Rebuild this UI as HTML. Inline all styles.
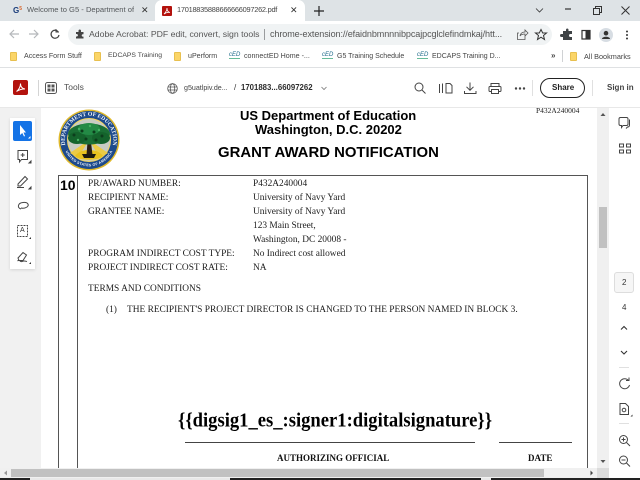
<!DOCTYPE html>
<html><head><meta charset="utf-8">
<style>
html,body{margin:0;padding:0;width:640px;height:480px;overflow:hidden;background:#fff}
body{position:relative;font-family:"Liberation Sans",sans-serif;color:#3c4043}
.a{position:absolute}
.t{position:absolute;white-space:nowrap;line-height:1}
.d{font-family:"Liberation Serif",serif;font-size:9.4px;color:#1c1c1c}
.h{font-weight:bold;color:#000}
svg{position:absolute;overflow:visible}
.bm{font-size:7.100px;color:#444;top:52.500px}
.f{position:absolute;top:52px;width:7px;height:9px;background:#fbd568;border:1px solid #e8c04f;box-sizing:border-box;border-radius:1px}
.ced{position:absolute;top:52px;font:italic 6px "Liberation Sans",sans-serif;color:#1d6a8a;border-bottom:1px solid #6b9;line-height:6px}
</style></head><body>
<!-- tab strip -->
<div class="a" style="left:0;top:0;width:640px;height:21px;background:#dee3e6"></div>
<div class="a" style="left:155px;top:0;width:150px;height:22px;background:#fff;border-radius:7px 7px 0 0"></div>
<div class="t" style="left:13px;top:7px;font-size:8px;font-weight:bold;color:#1a3c7a">G<span style="font-size:5px;color:#d8642a;vertical-align:3px">5</span></div>
<div class="t" style="left:27px;top:6px;font-size:7.600px;width:107px;overflow:hidden;color:#55595c">Welcome to G5 - Department of</div>
<div class="t" style="left:141px;top:6px;font-size:9px;color:#333">✕</div>
<div class="a" style="left:162px;top:6px;width:10px;height:10px;background:#b3120d;border-radius:1px"></div>
<svg style="left:162px;top:6px" width="10" height="10" viewBox="0 0 10 10"><path d="M2 8C4 6 5 4 5 2C5 4 6 6 8 6.500C6 6 4 6.500 2 8Z" fill="none" stroke="#fff" stroke-width=".8"/></svg>
<div class="t" style="left:177px;top:6px;font-size:7.400px;letter-spacing:-.25px;color:#444">17018835888666666097262.pdf</div>
<div class="t" style="left:290px;top:6px;font-size:9px;color:#333">✕</div>
<svg style="left:314px;top:6px" width="10" height="10"><path d="M5 0V10M0 5H10" stroke="#222" stroke-width="1.200"/></svg>
<svg style="left:535px;top:5px" width="100" height="12" fill="none" stroke="#333"><path d="M1 3.500L4.500 7L8 3.500" stroke-width=".8"/><path d="M30 4H36" stroke-width="1.200"/><rect x="60.500" y="1.500" width="6" height="6" fill="#dee3e6"/><rect x="58.500" y="3.500" width="6" height="6" fill="#dee3e6"/><path d="M86.500 1.500L94.500 9.500M94.500 1.500L86.500 9.500" stroke-width="1"/></svg>
<!-- address bar -->
<svg style="left:8px;top:27px" width="60" height="14" fill="none"><path d="M11 7H2M6 3L2 7L6 11" stroke="#b5b8bb" stroke-width="1.200"/><path d="M21 7H30M26 3L30 7L26 11" stroke="#b5b8bb" stroke-width="1.200"/><path d="M50 4.500A4 4 0 1 0 51 8" stroke="#444" stroke-width="1.200"/><path d="M48 2V5H51" stroke="#444" stroke-width="1" /></svg>
<div class="a" style="left:68px;top:24px;width:484px;height:21px;background:#f0f3f4;border-radius:11px"></div>
<svg style="left:75px;top:29px" width="10" height="10"><path d="M1 3H3.500V1.500A1.300 1.300 0 0 1 6 1.500V3H8.500V5.200H7.500A1.300 1.300 0 0 0 7.500 7.600H8.500V9.500H1V7.500H2A1.300 1.300 0 0 0 2 5H1Z" fill="#444"/></svg>
<div class="t" style="left:89px;top:30px;font-size:8.700px;color:#555">Adobe Acrobat: PDF edit, convert, sign tools</div>
<div class="a" style="left:264px;top:29px;width:1px;height:11px;background:#9a9c9e"></div>
<div class="t" style="left:270px;top:30px;font-size:9.050px;color:#555;letter-spacing:-.01em">chrome-extension://efaidnbmnnnibpcajpcglclefindmkaj/htt...</div>
<svg style="left:516px;top:28px" width="120" height="14" fill="none" stroke="#555"><path d="M3 5H1.500V11.500H9V8M4 8C4.500 5 6.500 4 9 4V2L12 5L9 8V6C7 6 5 6.500 4 8Z" stroke-width=".8"/><path d="M25 1.500L26.700 5H30.500L27.500 7.500L28.500 11.500L25 9.200L21.500 11.500L22.500 7.500L19.500 5H23.300Z" stroke="#333" stroke-width="1"/><path d="M47 3H50V1.500A1.300 1.300 0 0 1 52.500 1.500V3H56V6H54.500A1.500 1.500 0 0 0 54.500 9H56V12H47V9H45.500A1.500 1.500 0 0 1 45.500 6H47Z" fill="#3f4346" stroke="none"/><rect x="66" y="2.500" width="8" height="8.500" stroke="#333" stroke-width="1.200"/><rect x="69.500" y="2.500" width="4.500" height="8.500" fill="#333" stroke="none"/></svg>
<div class="a" style="left:599px;top:28px;width:14px;height:14px;border-radius:50%;background:#d7dde3"></div>
<svg style="left:599px;top:28px" width="14" height="14"><circle cx="7" cy="5.200" r="2.300" fill="#333"/><path d="M3 11C3 8 11 8 11 11Z" fill="#333"/></svg>
<svg style="left:625px;top:30px" width="4" height="10"><circle cx="2" cy="1.500" r="1" fill="#333"/><circle cx="2" cy="5" r="1" fill="#333"/><circle cx="2" cy="8.500" r="1" fill="#333"/></svg>
<!-- bookmarks -->
<div class="f" style="left:10px"></div><div class="t bm" style="left:24px">Access Form Stuff</div>
<div class="f" style="left:94px"></div><div class="t bm" style="left:108px;font-size:6.800px">EDCAPS Training</div>
<div class="f" style="left:174px"></div><div class="t bm" style="left:188px">uPerform</div>
<div class="ced" style="left:229px">cED</div><div class="t bm" style="left:244px">connectED Home -...</div>
<div class="ced" style="left:322px">cED</div><div class="t bm" style="left:337px;font-size:7px">G5 Training Schedule</div>
<div class="ced" style="left:417px">cED</div><div class="t bm" style="left:432px;font-size:7px">EDCAPS Training D...</div>
<div class="t" style="left:551px;top:52px;font-size:8px;color:#444;font-weight:bold">»</div>
<div class="a" style="left:562px;top:50px;width:1px;height:12px;background:#d0d2d4"></div>
<div class="f" style="left:570px"></div><div class="t bm" style="left:584px;font-size:7.300px">All Bookmarks</div>
<div class="a" style="left:0;top:67px;width:640px;height:1px;background:#dfe1e3"></div>
<!-- acrobat header -->
<div class="a" style="left:13px;top:80px;width:15px;height:15px;background:#b3120d;border-radius:2px"></div>
<svg style="left:13px;top:80px" width="15" height="15" fill="none"><path d="M3.500 11.500C6 9.500 7.500 6.500 7.500 3.500C7.500 6.500 9 8.500 12 9C9 8.800 6 9.800 3.500 11.500Z" stroke="#fff" stroke-width="1"/></svg>
<div class="a" style="left:38px;top:80px;width:1px;height:16px;background:#d4d4d4"></div>
<svg style="left:45px;top:82px" width="12" height="12" fill="none" stroke="#555"><rect x=".5" y=".5" width="11" height="11" rx="2"/><rect x="3" y="3" width="2" height="2" fill="#555"/><rect x="7" y="3" width="2" height="2" fill="#555"/><rect x="3" y="7" width="2" height="2" fill="#555"/><rect x="7" y="7" width="2" height="2" fill="#555"/></svg>
<div class="t" style="left:64px;top:83px;font-size:8.500px;color:#505050">Tools</div>
<svg style="left:167px;top:83px" width="11" height="11" fill="none" stroke="#555" stroke-width=".8"><circle cx="5.500" cy="5.500" r="4.800"/><ellipse cx="5.500" cy="5.500" rx="2.200" ry="4.800"/><path d="M.7 4H10.300M.7 7H10.300"/></svg>
<div class="t" style="left:184px;top:84.500px;font-size:7.100px;color:#444">g5uatlpiv.de...</div>
<div class="t" style="left:234px;top:84px;font-size:8px;color:#333">/</div>
<div class="t" style="left:241px;top:84px;font-size:7.800px;font-weight:bold;color:#2c2c2c">1701883...66097262</div>
<svg style="left:321px;top:86px" width="6" height="5" fill="none" stroke="#777" stroke-width=".8"><path d="M.5 1L3 3.500L5.500 1"/></svg>
<svg style="left:413px;top:81px" width="120" height="15" fill="none" stroke="#444" stroke-width="1"><circle cx="6" cy="6" r="4"/><path d="M9 9L12.500 12.500"/><path d="M26.500 3V12M29.500 2.500V12M33 2.500H37L39 4.500V12H33Z"/><path d="M57 1.500V9M53.500 5.800L57 9.300L60.500 5.800M51.500 10V12.500H63V10"/><rect x="78" y="2.500" width="8" height="3"/><rect x="76" y="5.500" width="12" height="5" rx="1"/><rect x="78.500" y="8.500" width="7" height="4" fill="#fff"/><circle cx="103" cy="7.500" r=".7" fill="#555"/><circle cx="107" cy="7.500" r=".7" fill="#555"/><circle cx="111" cy="7.500" r=".7" fill="#555"/></svg>
<div class="a" style="left:532px;top:80px;width:1px;height:16px;background:#e0e0e0"></div>
<div class="a" style="left:540px;top:78px;width:45px;height:20px;box-sizing:border-box;border:1.300px solid #222;border-radius:10px"></div>
<div class="t" style="left:552px;top:83.500px;font-size:8px;font-weight:bold;color:#222">Share</div>
<div class="a" style="left:592px;top:80px;width:1px;height:16px;background:#e0e0e0"></div>
<div class="t" style="left:607px;top:83.500px;font-size:8px;font-weight:bold;color:#444">Sign in</div>
<div class="a" style="left:0;top:107px;width:640px;height:1px;background:#e8e8e8"></div>
<!-- viewer backgrounds -->
<div class="a" style="left:0;top:108px;width:41px;height:360px;background:#f1f1f1"></div>
<div class="a" style="left:597px;top:108px;width:12px;height:360px;background:#f0f0f0"></div>
<div class="a" style="left:599px;top:207px;width:8px;height:41px;background:#c1c1c1"></div>
<svg style="left:600px;top:112px" width="6" height="355"><path d="M3 1L5.500 4H.5Z" fill="#555"/><path d="M3 351L5.500 348H.5Z" fill="#555"/></svg>
<!-- left toolbar -->
<div class="a" style="left:10px;top:118px;width:25px;height:151px;background:#fff;box-shadow:0 1px 3px rgba(0,0,0,.12)"></div>
<div class="a" style="left:13px;top:121px;width:19px;height:20px;background:#1473e6;border-radius:2px"></div>
<svg style="left:13px;top:121px" width="19" height="20"><path d="M7 4V14L9.300 12L11 15.500L12 15L10.500 11.500H13Z" fill="#fff"/><path d="M17.500 17.500H15L17.500 15Z" fill="#fff"/></svg>
<svg style="left:16px;top:149px" width="16" height="17" fill="none" stroke="#444" stroke-width="1"><path d="M2 1.500H11.500V10.500H5.500L3.500 13V10.500H2Z"/><path d="M6.700 4V8M4.700 6H8.700"/><path d="M15 14H13L15 12Z" fill="#333"/></svg>
<svg style="left:16px;top:174px" width="16" height="16" fill="none" stroke="#444" stroke-width="1"><path d="M2 10L9 2.500L11.500 5L4.500 12H2Z"/><path d="M1 13.500H8"/><path d="M15 15H13L15 13Z" fill="#333"/></svg>
<svg style="left:16px;top:199px" width="16" height="14" fill="none" stroke="#444" stroke-width="1"><path d="M5 10C1 9 1.500 4 7 3.500C12 3 13.500 6 11 8C9.500 9 7 9.500 5 9"/></svg>
<svg style="left:16px;top:224px" width="16" height="16" fill="none" stroke="#444" stroke-width="1"><rect x="1.500" y="1.500" width="10" height="11" stroke-dasharray="2 1"/><path d="M15 15H13L15 13Z" fill="#333" stroke="none"/></svg>
<div class="t" style="left:20px;top:227px;font-size:7px;color:#333">A</div>
<svg style="left:16px;top:249px" width="16" height="16" fill="none" stroke="#444" stroke-width="1"><path d="M2 9L7 3.500L10.500 6L7 11.500H3Z"/><path d="M1.500 12C4 10 4 13.500 6 12.500S9 12 11 12.500"/><path d="M15 15H13L15 13Z" fill="#333" stroke="none"/></svg>
<!-- seal -->
<svg style="left:58px;top:109px" width="62" height="62" viewBox="0 0 62 62">
<defs><path id="sealtop" d="M9 41A24.200 24.200 0 1 1 53 41"/><path id="sealbot" d="M9 38A23 23 0 0 0 53 38"/></defs>
<circle cx="31" cy="31" r="30.500" fill="#e0b92b"/><circle cx="31" cy="31" r="29" fill="#1d4a8c"/>
<circle cx="31" cy="31" r="22" fill="#f3d664"/><circle cx="31" cy="31" r="21" fill="#c8ccc4"/>
<path d="M31 31L12 44L20 49ZM31 31L50 44L42 49Z" fill="#eccb45"/>
<path d="M17 47C21 42 26 41 31 41C36 41 41 42 45 47C41 52 21 52 17 47Z" fill="#e8c21f"/>
<path d="M28.500 46L29.500 33L23 28H27L31 31L36 26H38L33 33L34.500 46Z" fill="#2a1e12"/>
<path d="M24 45H38L36 49H26Z" fill="#1d1a10"/>
<ellipse cx="31" cy="25" rx="21" ry="10.500" fill="#1a6f35"/>
<ellipse cx="19" cy="29" rx="9" ry="6" fill="#14632c"/><ellipse cx="43" cy="29" rx="9" ry="6" fill="#14632c"/><ellipse cx="31" cy="20" rx="11" ry="6" fill="#238a45"/>
<g fill="#0c3d1c"><circle cx="16" cy="26" r="1.500"/><circle cx="24" cy="22" r="1.500"/><circle cx="36" cy="23" r="1.500"/><circle cx="44" cy="27" r="1.500"/><circle cx="28" cy="30" r="1.500"/><circle cx="38" cy="31" r="1.500"/></g>
<g fill="#43b060"><circle cx="21" cy="20" r="1.200"/><circle cx="32" cy="17" r="1.200"/><circle cx="41" cy="21" r="1.200"/><circle cx="20" cy="31" r="1.200"/></g>
<text font-family="Liberation Serif, serif" font-weight="bold" font-size="5.800" fill="#f2f5fa" text-anchor="middle"><textPath href="#sealtop" startOffset="50%">DEPARTMENT OF EDUCATION</textPath></text>
<text font-family="Liberation Sans, sans-serif" font-weight="bold" font-size="3.600" fill="#f2f5fa" text-anchor="middle" dy="3"><textPath href="#sealbot" startOffset="50%">UNITED STATES OF AMERICA</textPath></text>
</svg>
<!-- page text -->
<div class="t h" style="left:240px;top:108.500px;font-size:13px">US Department of Education</div>
<div class="t h" style="left:255px;top:122.500px;font-size:13px">Washington, D.C. 20202</div>
<div class="t h" style="left:218px;top:146px;font-size:14.900px">GRANT AWARD NOTIFICATION</div>
<div class="t d" style="left:536px;top:107px;font-size:7.500px">P432A240004</div>
<!-- form box -->
<div class="a" style="left:58px;top:174.500px;width:530px;height:294px;box-sizing:border-box;border:1.300px solid #555;border-bottom:0"></div>
<div class="a" style="left:76.800px;top:175px;width:1.300px;height:293px;background:#555"></div>
<div class="t h" style="left:60px;top:178px;font-size:14px">10</div>
<div class="t d" style="left:88px;top:180px">PR/AWARD NUMBER:</div><div class="t d" style="left:253px;top:180px">P432A240004</div>
<div class="t d" style="left:88px;top:194px">RECIPIENT NAME:</div><div class="t d" style="left:253px;top:194px">University of Navy Yard</div>
<div class="t d" style="left:88px;top:208px">GRANTEE NAME:</div><div class="t d" style="left:253px;top:208px">University of Navy Yard</div>
<div class="t d" style="left:253px;top:222px">123 Main Street,</div>
<div class="t d" style="left:253px;top:236px">Washington, DC 20008 -</div>
<div class="t d" style="left:88px;top:250px">PROGRAM INDIRECT COST TYPE:</div><div class="t d" style="left:253px;top:250px">No Indirect cost allowed</div>
<div class="t d" style="left:88px;top:264px">PROJECT INDIRECT COST RATE:</div><div class="t d" style="left:253px;top:264px">NA</div>
<div class="t d" style="left:88px;top:285px">TERMS AND CONDITIONS</div>
<div class="t d" style="left:106px;top:306px">(1)</div><div class="t d" style="left:127px;top:306px">THE RECIPIENT'S PROJECT DIRECTOR IS CHANGED TO THE PERSON NAMED IN BLOCK 3.</div>
<div class="t" style="left:178px;top:410px;font:bold 18.600px 'Liberation Serif',serif;color:#000;transform:scaleY(1.100);transform-origin:0 50%">{{digsig1_es_:signer1:digitalsignature}}</div>
<div class="a" style="left:185px;top:442px;width:290px;height:1px;background:#444"></div>
<div class="a" style="left:499px;top:442px;width:73px;height:1px;background:#444"></div>
<div class="t" style="left:277px;top:453px;font:bold 9px 'Liberation Serif',serif;color:#111">AUTHORIZING OFFICIAL</div>
<div class="t" style="left:528px;top:453px;font:bold 9px 'Liberation Serif',serif;color:#111">DATE</div>
<!-- right panel -->
<svg style="left:618px;top:116px" width="16" height="42" fill="none" stroke="#444" stroke-width="1"><path d="M2.500 1.500H8.500Q10 1.500 10 3V8Q10 9.500 8.500 9.500H5L3.500 11.500V9.500H2.500Q1 9.500 1 8V3Q1 1.500 2.500 1.500Z"/><path d="M11.500 3.500V9Q11.500 11 9.500 11L8 12.500"/><rect x="1.500" y="28" width="4" height="3"/><rect x="8.500" y="28" width="4" height="3"/><rect x="1.500" y="34" width="4" height="3"/><rect x="8.500" y="34" width="4" height="3"/></svg>
<div class="a" style="left:614px;top:272px;width:20px;height:21px;background:#f6f6f6;border:1px solid #ddd;box-sizing:border-box;border-radius:3px"></div>
<div class="t" style="left:622px;top:279px;font-size:8px;color:#333">2</div>
<div class="t" style="left:622px;top:304px;font-size:8px;color:#333">4</div>
<svg style="left:620px;top:325px" width="10" height="32" fill="none" stroke="#333" stroke-width="1.100"><path d="M1 4.500L4 1.500L7 4.500M1 26L4 29L7 26"/></svg>
<div class="a" style="left:619px;top:367px;width:10px;height:1px;background:#e0e0e0"></div>
<svg style="left:618px;top:377px" width="14" height="14" fill="none" stroke="#444" stroke-width="1"><path d="M10.500 3.500A5 5 0 1 0 11.500 8"/><path d="M8 3.500H11V.5"/></svg>
<svg style="left:618px;top:402px" width="15" height="16" fill="none" stroke="#444" stroke-width="1"><path d="M2 1.500H7.500L10.500 4.500V12.500H2Z"/><circle cx="6" cy="8" r="1.800"/><path d="M14.500 14.500H12.500L14.500 12.500Z" fill="#333" stroke="none"/></svg>
<div class="a" style="left:619px;top:423px;width:10px;height:1px;background:#e0e0e0"></div>
<svg style="left:618px;top:434px" width="14" height="36" fill="none" stroke="#444" stroke-width="1"><circle cx="5.500" cy="5.500" r="4"/><path d="M8.500 8.500L12 12M3.500 5.500H7.500M5.500 3.500V7.500"/><circle cx="5.500" cy="26" r="4"/><path d="M8.500 29L12 32.500M3.500 26H7.500"/></svg>
<!-- bottom scrollbar -->
<div class="a" style="left:0;top:468px;width:609px;height:10px;background:#f0f0f0"></div>
<div class="a" style="left:11px;top:469px;width:533px;height:8px;background:#c1c1c1"></div>
<svg style="left:3px;top:470px" width="590" height="6"><path d="M1 3L4 .5V5.500Z" fill="#999"/><path d="M590 3L587.500 .5V5.500Z" fill="#444"/></svg>
<div class="a" style="left:597px;top:468px;width:12px;height:10px;background:#dcdcdc"></div>
<div class="a" style="left:0;top:478px;width:640px;height:2px;background:#222"></div>
<div class="a" style="left:30px;top:478px;width:200px;height:2px;background:#e8e8e8"></div>
<div class="a" style="left:481px;top:478px;width:10px;height:2px;background:#e8e8e8"></div>
</body></html>
